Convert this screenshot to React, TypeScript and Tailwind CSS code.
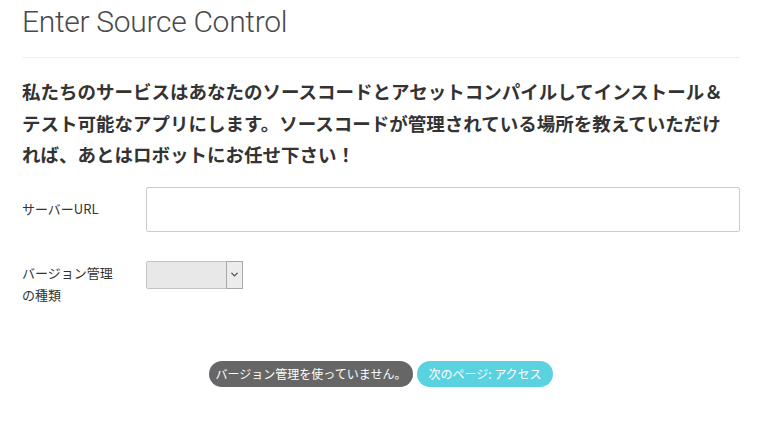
import { ChevronDown } from "lucide-react"

const jp = "font-['Meiryo','Noto_Sans_CJK_JP',sans-serif]"

export default function App() {
    return (
        <div className="min-h-[443px] bg-white">
            <div className="ml-[22px] w-[718px]">
                <h1 className="pt-[4px] font-['Roboto',sans-serif] text-[30px] font-light leading-[36px] tracking-[-0.3px] text-[#4a4a4a]">
                    Enter Source Control
                </h1>
                <hr className="mt-[17px] border-t border-[#eeeeee]" />
                <p className={`${jp} mt-[18px] text-[18.5px] font-bold leading-[31.5px] text-[#333]`}>
                    私たちのサービスはあなたのソースコードとアセットコンパイルしてインストール＆<br />
                    テスト可能なアプリにします。ソースコードが管理されている場所を教えていただけ<br />
                    れば、あとはロボットにお任せ下さい！
                </p>

                <div className={`${jp} mt-[16px] flex flex-col gap-[30px] text-[13px] text-[#333]`}>
                    <div className="flex items-center">
                        <label htmlFor="server-url" className="w-[124px] shrink-0 leading-[22px]">
                            サーバーURL
                        </label>
                        <input
                            id="server-url"
                            className="h-[45px] flex-1 rounded-[2px] border border-[#cccccc] bg-white px-3 outline-none"
                        />
                    </div>
                    <div className="flex items-start">
                        <label className="w-[124px] shrink-0 pr-[24px] leading-[22px]">
                            バージョン管理の種類
                        </label>
                        <div className="mt-[-1px] flex h-[28px] w-[97px] items-stretch rounded-[2px] border border-[#c4c4c4] bg-[#e8e8e8]">
                            <div className="flex-1" />
                            <div className="my-[-1px] mr-[-1px] flex w-[17px] items-center justify-center border border-[#a9a9a9] bg-[#ececec]">
                                <ChevronDown size={11} strokeWidth={3} className="text-[#555]" />
                            </div>
                        </div>
                    </div>
                </div>

                <div className={`${jp} mt-[55px] flex justify-center gap-[4px] text-[12px] text-white`}>
                    <button className="h-[26px] w-[204px] rounded-full bg-[#666666]">
                        バージョン管理を使っていません。
                    </button>
                    <button className="h-[26px] w-[136px] rounded-full bg-[#5bd2e0]">
                        次のページ: アクセス
                    </button>
                </div>
            </div>
        </div>
    )
}
